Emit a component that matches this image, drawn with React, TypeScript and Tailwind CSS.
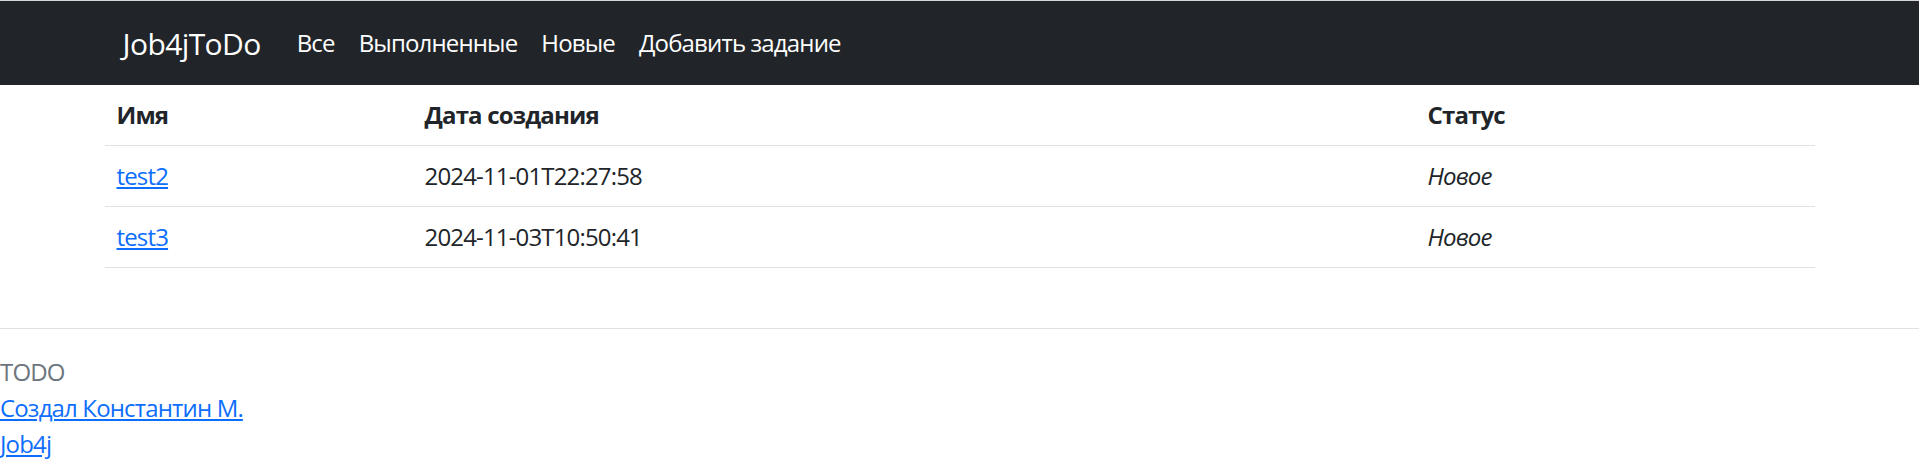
const navLinks = ['Все', 'Выполненные', 'Новые', 'Добавить задание'];

const tasks = [
  { name: 'test2', created: '2024-11-01T22:27:58', status: 'Новое' },
  { name: 'test3', created: '2024-11-03T10:50:41', status: 'Новое' },
];

export default function App() {
  return (
    <div className="min-h-[461px] bg-white text-[24px] leading-[36px] tracking-[-0.035em] text-[#212529] font-['Open_Sans','Noto_Sans',sans-serif] border-t border-[#d4d4d4]">
      {/* Navbar */}
      <nav className="bg-[#212529] py-[12px]">
        <div className="w-[1710px] mx-auto px-[18px] flex items-center">
          <a href="#" className="text-white text-[30px] leading-[45px] tracking-[-0.02em] py-[7.5px] mr-[24px]">
            Job4jToDo
          </a>
          <div className="flex items-center">
            {navLinks.map((link) => (
              <a key={link} href="#" className="text-white px-[12px] py-[12px]">
                {link}
              </a>
            ))}
          </div>
        </div>
      </nav>

      {/* Tasks table */}
      <div className="w-[1710px] mx-auto">
        <table className="w-full table-fixed border-collapse mb-[60px]">
          <colgroup>
            <col className="w-[308px]" />
            <col className="w-[1003px]" />
            <col />
          </colgroup>
          <thead>
            <tr className="border-b border-[#dee2e6]">
              <th className="text-left font-bold px-[12px] py-[12px]">Имя</th>
              <th className="text-left font-bold px-[12px] py-[12px]">Дата создания</th>
              <th className="text-left font-bold px-[12px] py-[12px]">Статус</th>
            </tr>
          </thead>
          <tbody>
            {tasks.map((task) => (
              <tr key={task.name} className="border-b border-[#dee2e6]">
                <td className="px-[12px] py-[12px]">
                  <a href="#" className="text-[#0d6efd] underline">
                    {task.name}
                  </a>
                </td>
                <td className="px-[12px] py-[12px]">{task.created}</td>
                <td className="px-[12px] py-[12px] italic">{task.status}</td>
              </tr>
            ))}
          </tbody>
        </table>
      </div>

      {/* Footer */}
      <footer className="border-t border-[#dee2e6] pt-[25px]">
        <div className="text-[#6c757d]">TODO</div>
        <div>
          <a href="#" className="text-[#0d6efd] underline">
            Создал Константин М.
          </a>
        </div>
        <div>
          <a href="#" className="text-[#0d6efd] underline">
            Job4j
          </a>
        </div>
      </footer>
    </div>
  );
}
